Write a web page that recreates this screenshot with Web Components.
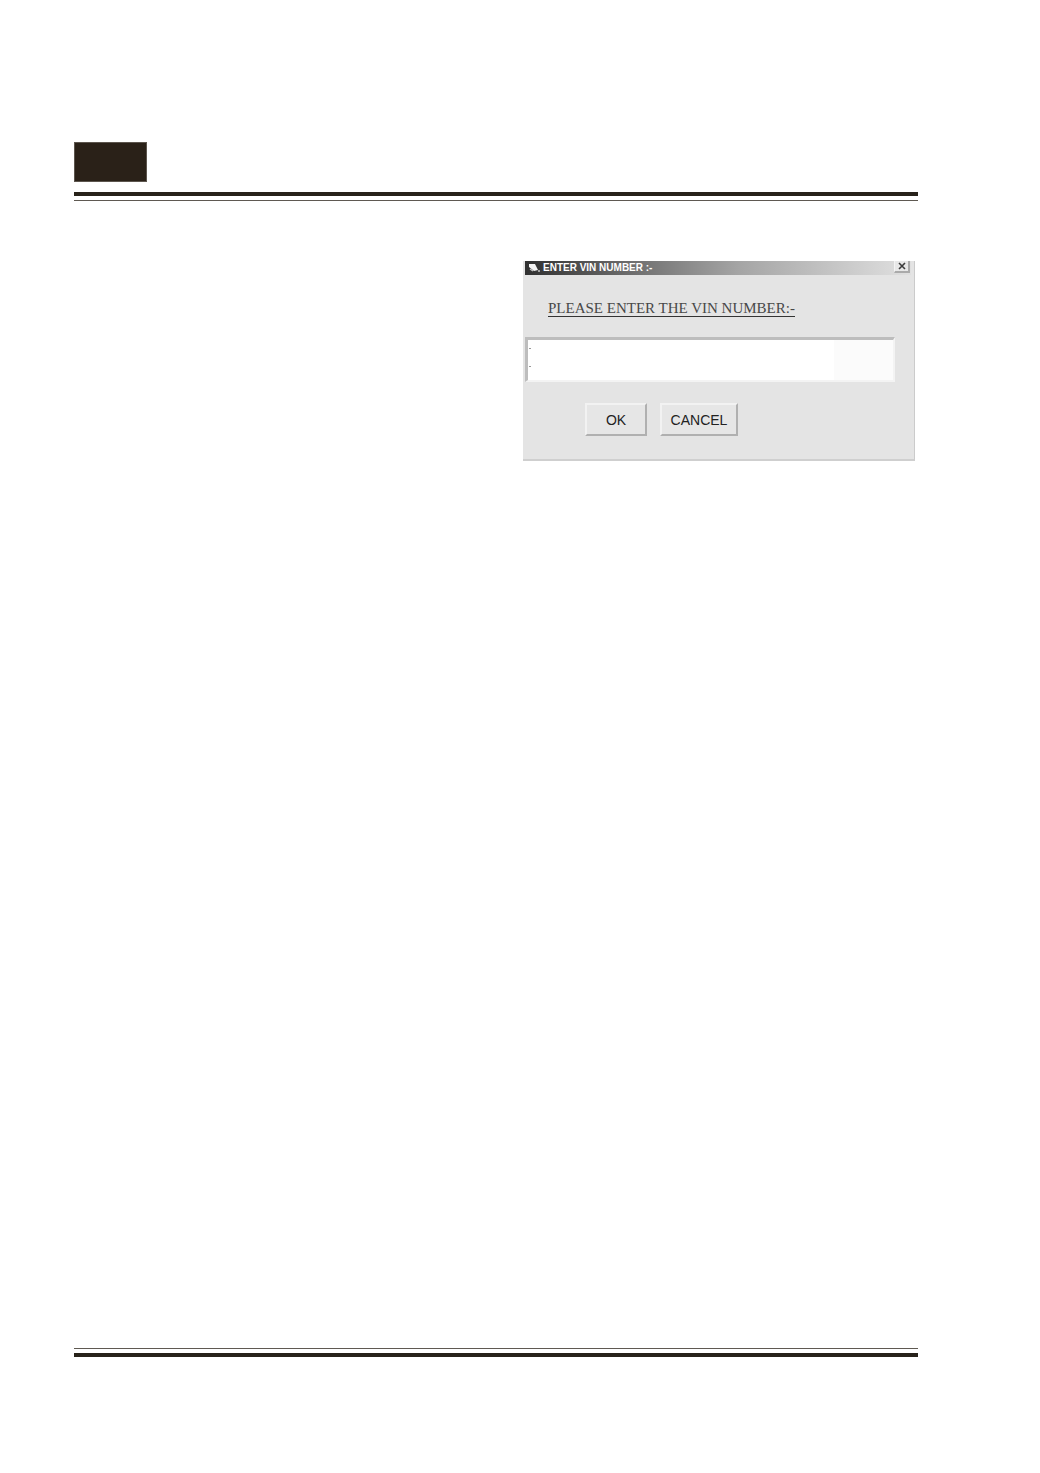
<!DOCTYPE html>
<html lang="en">
<head>
<meta charset="utf-8">
<meta name="viewport" content="width=device-width, initial-scale=1">
<title>Enter VIN number</title>
<style>
  body {
    margin: 0;
    background: #fff;
    font-family: "Liberation Sans", Arial, sans-serif;
  }
</style>
</head>
<body>
<manual-page>
  <dialog-window>
    <span slot="title">ENTER VIN NUMBER :-</span>
    <vin-field>PLEASE ENTER THE VIN NUMBER:-</vin-field>
    <dialog-button slot="actions">OK</dialog-button>
    <dialog-button slot="actions" wide>CANCEL</dialog-button>
  </dialog-window>
</manual-page>

<script>
// Printed page: tab and double rule on top, double rule at the foot
class ManualPage extends HTMLElement {
  constructor() {
    super();
    this.attachShadow({ mode: 'open' });
    this.render();
  }

  render() {
    this.shadowRoot.innerHTML = `
      <style>
        :host {
          display: flex;
          flex-direction: column;
          box-sizing: border-box;
          min-height: 100vh;
          padding: 142px 122px 116px 74px;
        }
        .tab {
          width: 71px;
          height: 38px;
          background: #2a2118;
          border: 1px solid #5c554d;
        }
        .rule {
          height: 4px;
          border-top: 4px solid #28221a;
          border-bottom: 1px solid #5f5952;
        }
        header .rule {
          margin-top: 10px;
        }
        footer .rule {
          border-top: 1px solid #5f5952;
          border-bottom: 4px solid #28221a;
        }
        main {
          flex: 1;
          display: flex;
          justify-content: flex-end;
          align-items: flex-start;
          padding: 60px 3px 0 0;
        }
      </style>
      <header>
        <div class="tab"></div>
        <div class="rule"></div>
      </header>
      <main><slot></slot></main>
      <footer><div class="rule"></div></footer>
    `;
  }
}
customElements.define('manual-page', ManualPage);

class DialogWindow extends HTMLElement {
  constructor() {
    super();
    this.attachShadow({ mode: 'open' });
    this.render();
  }

  connectedCallback() {
    this.shadowRoot.querySelector('.close').addEventListener('click', () => {
      this.hidden = true;
    });
  }

  render() {
    this.shadowRoot.innerHTML = `
      <style>
        :host {
          display: block;
          box-sizing: border-box;
          width: 100%;
          max-width: 392px;
          padding: 0 3px 23px 2px;
          background: #e4e4e4;
          border-right: 1px solid #cbcbcb;
          border-bottom: 2px solid #cfcfcf;
        }
        :host([hidden]) {
          display: none;
        }
        .bar {
          display: flex;
          align-items: center;
          height: 14px;
          padding: 0 1px 0 3px;
          background: linear-gradient(90deg, #303030, #777 32%, #a4a4a4 55%, #e0e0e0);
          color: #fff;
          font-size: 10px;
          font-weight: bold;
          line-height: 12px;
        }
        .bar svg {
          flex: none;
          margin-right: 3px;
        }
        .title {
          flex: 1;
          white-space: nowrap;
        }
        .close {
          display: grid;
          place-items: center;
          width: 16px;
          height: 12px;
          margin: 0 0 2px;
          padding: 0;
          background: #e8e8e8;
          border: solid;
          border-width: 0 2px 2px 1px;
          border-color: #f4f4f4 #aaa #aaa #f4f4f4;
        }
        .close svg {
          margin: 0;
        }
        .actions {
          display: flex;
          gap: 13px;
          padding: 21px 0 0 60px;
        }
      </style>
      <div class="bar">
        <svg width="12" height="12" viewBox="0 0 12 12" aria-hidden="true">
          <path d="M1 2l6 0 3 6-4 1-5-4z" fill="#f4f4f4"/>
          <path d="M2 7l3 2M10 9h2" stroke="#c4c4c4" stroke-width="1.5"/>
        </svg>
        <span class="title"><slot name="title"></slot></span>
        <button class="close" type="button" aria-label="Close">
          <svg width="8" height="8" viewBox="0 0 8 8" aria-hidden="true">
            <path d="M1 1l6 6M7 1L1 7" stroke="#3c3c3c" stroke-width="1.6"/>
          </svg>
        </button>
      </div>
      <slot></slot>
      <div class="actions"><slot name="actions"></slot></div>
    `;
  }
}
customElements.define('dialog-window', DialogWindow);

class VinField extends HTMLElement {
  constructor() {
    super();
    this.attachShadow({ mode: 'open' });
    this.render();
  }

  render() {
    this.shadowRoot.innerHTML = `
      <style>
        :host {
          display: block;
          padding: 26px 16px 0 0;
        }
        label {
          display: block;
          width: fit-content;
          margin: 0 0 20px 23px;
          border-bottom: 1px solid #333;
          color: #484848;
          font-family: "Liberation Serif", "Times New Roman", serif;
          font-size: 15px;
          line-height: 15px;
          white-space: nowrap;
        }
        textarea {
          display: block;
          box-sizing: border-box;
          width: 100%;
          height: 45px;
          margin: 0;
          padding: 4px 8px;
          resize: none;
          outline: none;
          overflow: hidden;
          border: solid;
          border-width: 3px 2px 2px 3px;
          border-color: #bdbdbd #f3f3f3 #f3f3f3 #bdbdbd;
          background:
            linear-gradient(#999, #999) 1px 8px / 2px 1px no-repeat,
            linear-gradient(#999, #999) 1px 26px / 2px 1px no-repeat,
            linear-gradient(#fbfbfb, #fbfbfb) right / 59px 100% no-repeat,
            #fff;
          font: 14px/16px "Liberation Sans", Arial, sans-serif;
        }
      </style>
      <label for="vin"><slot></slot></label>
      <textarea id="vin"></textarea>
    `;
  }
}
customElements.define('vin-field', VinField);

class DialogButton extends HTMLElement {
  constructor() {
    super();
    this.attachShadow({ mode: 'open' });
    this.render();
  }

  render() {
    this.shadowRoot.innerHTML = `
      <style>
        :host {
          display: block;
          width: 62px;
        }
        :host([wide]) {
          width: 78px;
        }
        button {
          box-sizing: border-box;
          width: 100%;
          height: 33px;
          padding: 0;
          background: #e6e6e6;
          border: 2px solid;
          border-color: #f2f2f2 #b0b0b0 #b0b0b0 #f2f2f2;
          color: #222;
          font: 14px/16px "Liberation Sans", Arial, sans-serif;
        }
      </style>
      <button type="button"><slot></slot></button>
    `;
  }
}
customElements.define('dialog-button', DialogButton);
</script>
</body>
</html>
